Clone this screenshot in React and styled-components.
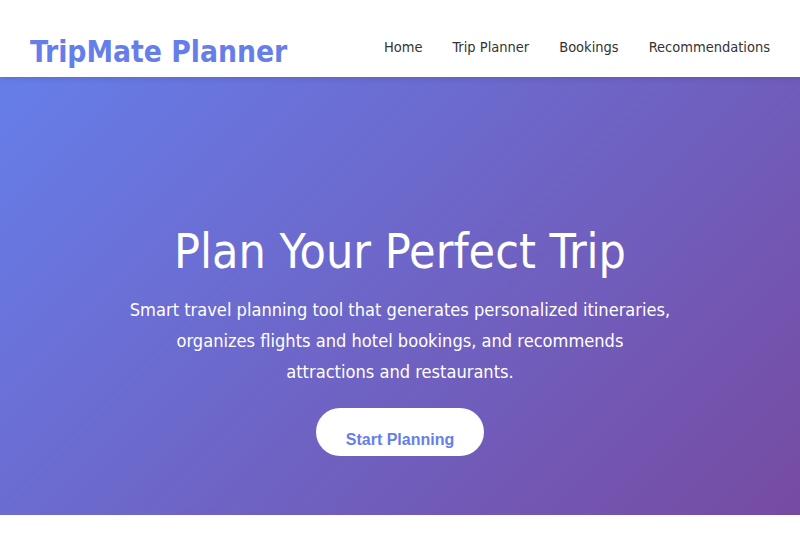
import React from "react";
import styled, { createGlobalStyle } from "styled-components";

const Global = createGlobalStyle`
  * { box-sizing: border-box; }
  html, body { margin: 0; padding: 0; background: #ffffff; }
  body { font-family: "DejaVu Sans Condensed", "DejaVu Sans", sans-serif; color: #333; }
`;

const Header = styled.header`
  height: 77px;
  background: #ffffff;
  display: flex;
  align-items: center;
  justify-content: space-between;
  padding: 22px 30px 0 30px;
  box-shadow: 0 2px 6px rgba(0, 0, 0, 0.1);
  position: relative;
  z-index: 1;
`;

const Logo = styled.div`
  font-family: "DejaVu Sans Condensed", "DejaVu Sans", sans-serif;
  font-weight: bold;
  font-size: 29.7px;
  color: #667eea;
  margin-top: 3px;
`;

const Nav = styled.nav`
  display: flex;
  gap: 30px;
  margin-bottom: 5px;
`;

const NavLink = styled.a`
  font-size: 14.5px;
  color: #333;
  text-decoration: none;
`;

const Hero = styled.section`
  background: linear-gradient(135deg, #667eea 0%, #764ba2 100%);
  height: 438px;
  display: flex;
  flex-direction: column;
  align-items: center;
  padding: 146px 20px 0;
  color: #ffffff;
  text-align: center;
`;

const Title = styled.h1`
  margin: 0;
  font-weight: normal;
  font-size: 48px;
  line-height: 56px;
`;

const Lead = styled.p`
  margin: 15px 0 0;
  max-width: 600px;
  font-size: 18.1px;
  line-height: 31px;
`;

const Button = styled.button`
  margin-top: 21px;
  background: #ffffff;
  color: #667eea;
  border: none;
  border-radius: 25px;
  padding: 23px 30px 7px;
  font-family: "Liberation Sans", Arial, sans-serif;
  font-weight: bold;
  font-size: 16px;
  line-height: 18px;
  cursor: pointer;
`;

export default function App() {
  return (
    <>
      <Global />
      <Header>
        <Logo>TripMate Planner</Logo>
        <Nav>
          <NavLink href="#">Home</NavLink>
          <NavLink href="#">Trip Planner</NavLink>
          <NavLink href="#">Bookings</NavLink>
          <NavLink href="#">Recommendations</NavLink>
        </Nav>
      </Header>
      <Hero>
        <Title>Plan Your Perfect Trip</Title>
        <Lead>
          Smart travel planning tool that generates personalized itineraries,
          <br />
          organizes flights and hotel bookings, and recommends
          <br />
          attractions and restaurants.
        </Lead>
        <Button>Start Planning</Button>
      </Hero>
    </>
  );
}
